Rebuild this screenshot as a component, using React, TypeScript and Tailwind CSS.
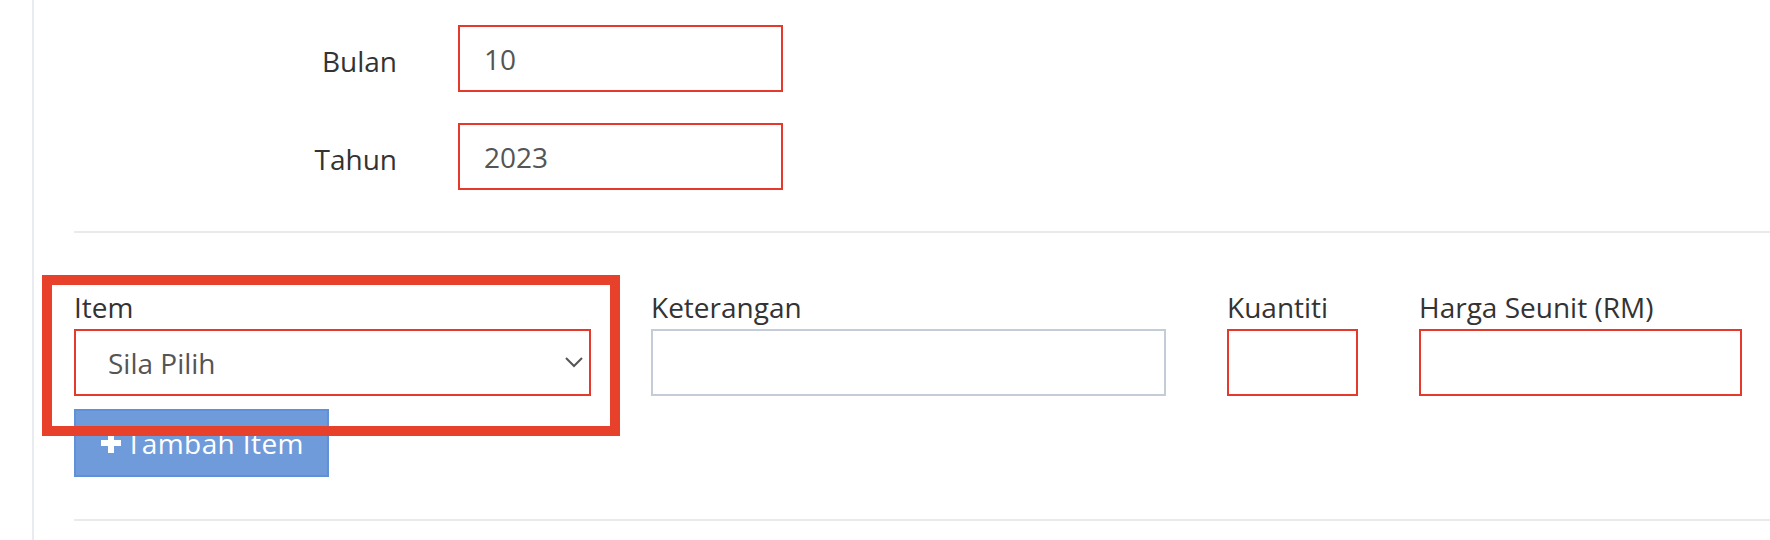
import React from 'react';

const Field: React.FC<{ label: string; value: string }> = ({ label, value }) => (
  <div className="flex">
    <label className="w-[323px] pt-[16px] text-right">{label}</label>
    <div className="ml-[61px] flex h-[67px] w-[325px] items-center border-2 border-[#e5392e] px-[24px] text-[#555]">
      {value}
    </div>
  </div>
);

const App: React.FC = () => {
  return (
    <div className="relative h-[540px] w-full overflow-hidden bg-white font-['Open_Sans'] text-[28px] leading-[40px] text-[#333]">
      <div className="ml-[32px] h-full border-l-2 border-[#e8ebf0] pl-[40px] pt-[25px]">
        {/* period */}
        <div className="flex flex-col gap-[31px]">
          <Field label="Bulan" value="10" />
          <Field label="Tahun" value="2023" />
        </div>

        <div className="mt-[41px] h-[2px] bg-[#e9eaec]" />

        {/* item row */}
        <div className="mt-[54px] flex">
          <div className="w-[517px]">
            <label className="block">Item</label>
            <div className="mt-[2px] flex h-[67px] items-center justify-between border-2 border-[#e5392e] pl-[32px] pr-[6px] text-[#555]">
              <span>Sila Pilih</span>
              <svg width="18" height="11" viewBox="0 0 18 11" fill="none">
                <path d="M1 1l8 8 8-8" stroke="#555" strokeWidth="2" />
              </svg>
            </div>
            <button className="mt-[13px] flex h-[68px] w-[255px] items-center border-2 border-[#6090d7] bg-[#6f9bdb] pl-[24px] text-white">
              <svg width="22" height="22" viewBox="0 0 22 22" className="mr-[4px]">
                <path d="M11 1v20M1 11h20" stroke="#fff" strokeWidth="6" />
              </svg>
              <span className="tracking-[0.4px]">Tambah Item</span>
            </button>
          </div>

          <div className="ml-[60px] w-[515px]">
            <label className="block">Keterangan</label>
            <div className="mt-[2px] h-[67px] border-2 border-[#c4ccd8]" />
          </div>

          <div className="ml-[61px] w-[131px]">
            <label className="block">Kuantiti</label>
            <div className="mt-[2px] h-[67px] border-2 border-[#e5392e]" />
          </div>

          <div className="ml-[61px] w-[323px]">
            <label className="block">Harga Seunit (RM)</label>
            <div className="mt-[2px] h-[67px] border-2 border-[#e5392e]" />
          </div>
        </div>

        <div className="mt-[42px] h-[2px] bg-[#e9eaec]" />
      </div>

      {/* annotation highlight */}
      <div className="pointer-events-none absolute left-[42px] top-[275px] h-[161px] w-[578px] border-[10px] border-[#e8412b]" />
    </div>
  );
};

export default App;
